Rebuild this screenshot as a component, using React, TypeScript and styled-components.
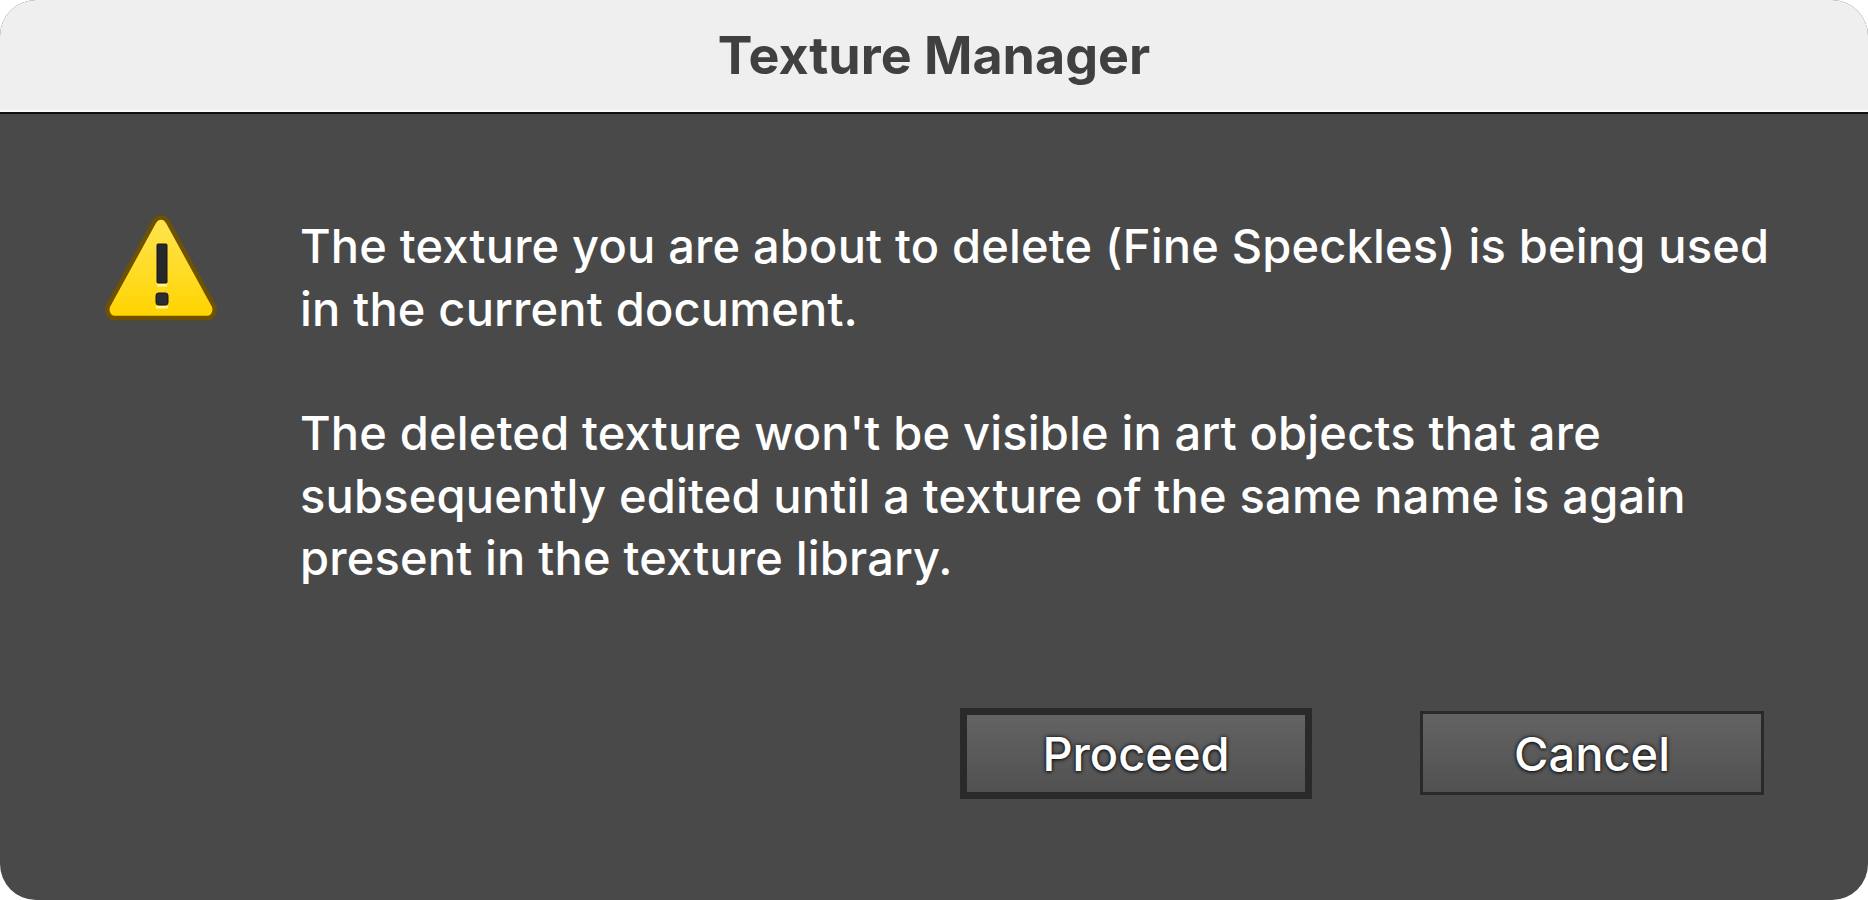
import React from "react";
import styled, { createGlobalStyle } from "styled-components";

const Global = createGlobalStyle`
  html, body { margin: 0; padding: 0; background: #fff; }
  body { font-family: Inter, "Liberation Sans", sans-serif; overflow: hidden; }
`;

const Dialog = styled.div`
  width: 1868px;
  height: 900px;
  border-radius: 36px;
  overflow: hidden;
  display: flex;
  flex-direction: column;
  background: #494949;
`;

const TitleBar = styled.header`
  height: 112px;
  flex: none;
  box-sizing: border-box;
  display: flex;
  align-items: center;
  justify-content: center;
  background: #efefef;
  border-bottom: 2px solid #f9f9f9;
  color: #404040;
  font-size: 52px;
  font-weight: 700;
`;

const Rule = styled.div`
  height: 2px;
  flex: none;
  background: #111;
`;

const Body = styled.main`
  flex: 1;
  display: flex;
  flex-direction: column;
  min-height: 0;
`;

const Content = styled.section`
  display: flex;
  padding: 101px 0 0 105px;
`;

const IconBox = styled.div`
  width: 112px;
  height: 106px;
  flex: none;
  margin-right: 83px;
`;

const Message = styled.div`
  width: 1540px;
  color: #fff;
  font-size: 47px;
  line-height: 62.5px;
  font-weight: 500;
  letter-spacing: 0.18px;
`;

const Paragraph = styled.p`
  margin: 0 0 62px;
  &:last-child { margin-bottom: 0; }
`;

const Actions = styled.footer`
  display: flex;
  align-items: center;
  justify-content: flex-end;
  gap: 108px;
  padding: 0 104px 0 0;
  margin-top: 118px;
`;

const Button = styled.button<{ $primary?: boolean }>`
  box-sizing: border-box;
  width: ${(p) => (p.$primary ? "352px" : "344px")};
  height: ${(p) => (p.$primary ? "91px" : "84px")};
  border: ${(p) => (p.$primary ? "7px" : "3px")} solid #2a2a2a;
  border-radius: 0;
  background: linear-gradient(#636363, #515151);
  color: #fff;
  font-family: Inter, "Liberation Sans", sans-serif;
  font-size: 47px;
  font-weight: 500;
  padding: 0;
  text-shadow: 0 0 4px rgba(0, 0, 0, 0.9), 0 1px 3px rgba(0, 0, 0, 0.6);
`;

const WarningIcon = () => (
  <svg width="112" height="106" viewBox="0 0 112 106">
    <defs>
      <linearGradient id="warnFill" x1="0" y1="0" x2="0" y2="1">
        <stop offset="0" stopColor="#ffe450" />
        <stop offset="1" stopColor="#ffd400" />
      </linearGradient>
    </defs>
    <path
      d="M49 7 C52.5 1 59.5 1 63 7 L109 91 C111 96 108 103 103 103 L9 103 C4 103 1 96 3 91 Z"
      fill="url(#warnFill)"
      stroke="#6f5200"
      strokeWidth="4.5"
      strokeLinejoin="round"
    />
    <rect x="52" y="29" width="10" height="39" rx="1" fill="#26282b" stroke="#14161a" strokeWidth="1" />
    <rect x="52" y="69" width="10" height="2.5" fill="#fff3a8" />
    <rect x="51" y="78" width="12" height="12" rx="2.5" fill="#2b2d30" stroke="#14161a" strokeWidth="1" />
    <rect x="51" y="91" width="12" height="2.5" fill="#fff3a8" />
  </svg>
);

export default function App() {
  return (
    <>
      <Global />
      <Dialog>
        <TitleBar>Texture Manager</TitleBar>
        <Rule />
        <Body>
          <Content>
            <IconBox>
              <WarningIcon />
            </IconBox>
            <Message>
              <Paragraph>
                The texture you are about to delete (Fine Speckles) is being used
                <br />
                in the current document.
              </Paragraph>
              <Paragraph>
                The deleted texture won't be visible in art objects that are
                <br />
                subsequently edited until a texture of the same name is again
                <br />
                present in the texture library.
              </Paragraph>
            </Message>
          </Content>
          <Actions>
            <Button $primary>Proceed</Button>
            <Button>Cancel</Button>
          </Actions>
        </Body>
      </Dialog>
    </>
  );
}
